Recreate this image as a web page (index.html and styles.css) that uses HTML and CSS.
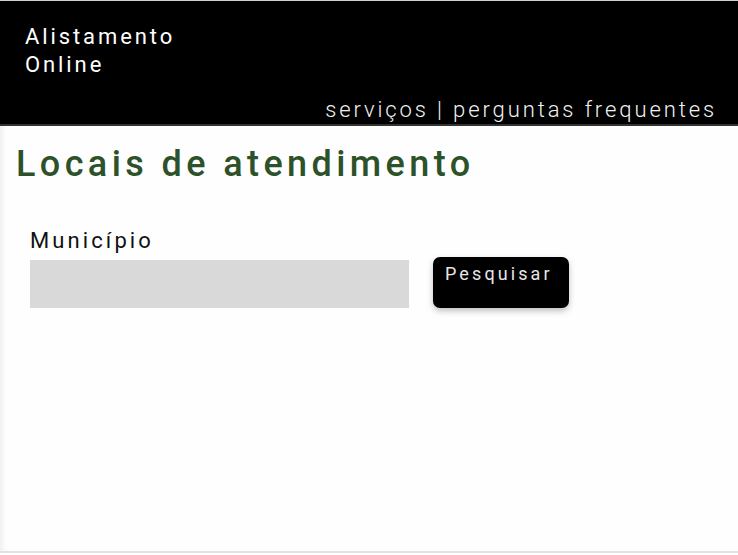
FILE: index.html
```html
<!DOCTYPE html>
<html lang="pt">
<head>
<meta charset="utf-8">
<title>Alistamento Online</title>
<link rel="stylesheet" href="styles.css">
</head>
<body>
<div class="frame">
  <header class="top">
    <div class="brand">Alistamento<br>Online</div>
    <nav class="nav">serviços | perguntas frequentes</nav>
  </header>
  <main class="content">
    <h1 class="title">Locais de atendimento</h1>
    <form class="search">
      <label class="label" for="mun">Município</label>
      <div class="row">
        <input class="field" id="mun" type="text">
        <button class="btn" type="button">Pesquisar</button>
      </div>
    </form>
  </main>
</div>
</body>
</html>
```

FILE: styles.css
```css
* { box-sizing: border-box; }
html, body { margin: 0; padding: 0; }
body {
  width: 738px;
  height: 555px;
  overflow: hidden;
  background: #fefefe;
  font-family: Roboto, "Liberation Sans", sans-serif;
}
.frame {
  height: 553px;
  border-top: 1px solid #cfcfcf;
  border-bottom: 2px solid #e2e2e2;
  box-shadow: inset 6px 0 6px -4px #ececec;
  display: flex;
  flex-direction: column;
}
.top {
  background: #000;
  height: 125px;
  border-bottom: 2px solid #333;
  display: flex;
  flex-direction: column;
  justify-content: space-between;
}
.brand {
  color: #fff;
  font-size: 22px;
  font-weight: 400;
  line-height: 28px;
  letter-spacing: 2.9px;
  padding: 22px 0 0 25px;
}
.nav {
  align-self: flex-end;
  color: #f2f2f2;
  font-weight: 300;
  font-size: 22px;
  letter-spacing: 2.9px;
  line-height: 26px;
  padding: 0 21px 1px 0;
}
.content {
  padding: 0 0 0 16px;
}
.title {
  margin: 16px 0 0 0;
  color: #2d5129;
  font-weight: 500;
  font-size: 36px;
  line-height: 44px;
  letter-spacing: 4.4px;
}
.search {
  margin: 42px 0 0 14px;
  display: flex;
  flex-direction: column;
}
.label {
  color: #111;
  font-size: 22px;
  line-height: 26px;
  letter-spacing: 3.1px;
  font-weight: 400;
}
.row {
  display: flex;
  align-items: flex-end;
  gap: 24px;
  margin-top: 3px;
}
.field {
  width: 379px;
  height: 48px;
  background: #d9d9d9;
  border: none;
  outline: none;
  margin: 0;
}
.btn {
  width: 136px;
  height: 51px;
  background: #000;
  color: #e6e6e6;
  border: none;
  border-radius: 7px;
  box-shadow: 0 3px 6px rgba(0,0,0,0.25);
  font-family: Roboto, "Liberation Sans", sans-serif;
  font-size: 18px;
  letter-spacing: 3.1px;
  display: flex;
  align-items: flex-start;
  padding: 6px 0 0 12px;
  margin: 0;
}
```
